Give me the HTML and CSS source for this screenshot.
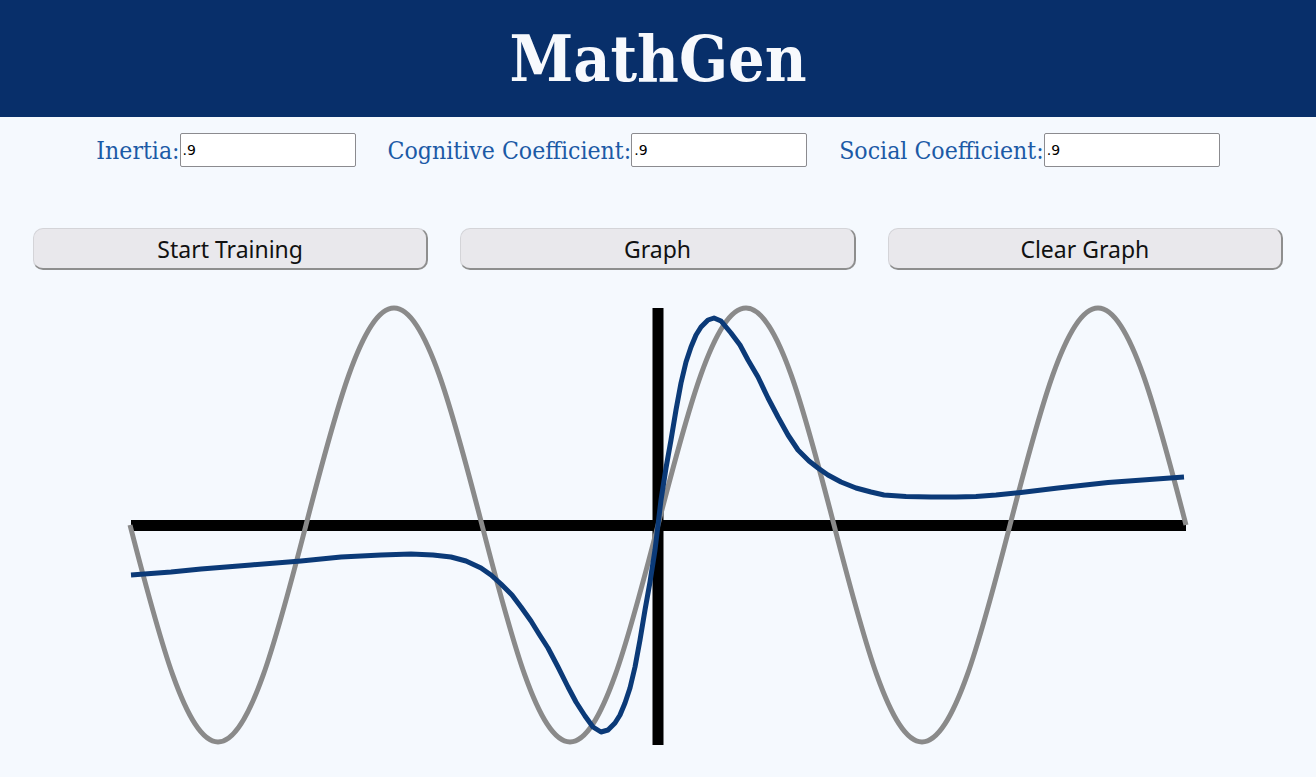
FILE: index.html
```html
<!DOCTYPE html>
<html>
<head>
<meta charset="utf-8">
<title>MathGen</title>
<link rel="stylesheet" href="styles.css">
</head>
<body>
<header class="header"><h1 class="title">MathGen</h1></header>
<div class="params">
  <label class="param"><span class="param-label">Inertia:</span><input class="param-input" type="text" value=".9"></label>
  <label class="param"><span class="param-label">Cognitive Coefficient:</span><input class="param-input" type="text" value=".9"></label>
  <label class="param"><span class="param-label">Social Coefficient:</span><input class="param-input" type="text" value=".9"></label>
</div>
<div class="actions">
  <button class="btn">Start Training</button>
  <button class="btn">Graph</button>
  <button class="btn">Clear Graph</button>
</div>
<div class="graph-wrap">
<svg class="graph" width="1056" height="437" viewBox="129 308 1056 437">
  <line x1="130" y1="525.5" x2="1185" y2="525.5" stroke="#000" stroke-width="11"/>
  <line x1="657" y1="308" x2="657" y2="745" stroke="#000" stroke-width="11"/>
  <path fill="none" stroke="#8a8a8a" stroke-width="5" d="M129,525 c28.7,111.2 56.2,217 88,217 c31.8,0 59.3,-105.8 88,-217 c28.7,-111.2 56.2,-217 88,-217 c31.8,0 59.3,105.8 88,217 c28.7,111.2 56.2,217 88,217 c31.8,0 59.3,-105.8 88,-217 c28.7,-111.2 56.2,-217 88,-217 c31.8,0 59.3,105.8 88,217 c28.7,111.2 56.2,217 88,217 c31.8,0 59.3,-105.8 88,-217 c28.7,-111.2 56.2,-217 88,-217 c31.8,0 59.3,105.8 88,217"/>
  <polyline fill="none" stroke="#0b3a78" stroke-width="5" stroke-linejoin="round" points="130,575 170,572 200,569 250,565 300,561 340,557 380,555 410,554 432,555 450,557 465,561 480,568 490,575 500,584 511,595 520,607 530,621 538,634 547,648 557,667 567,687 575,702 584,716 592,727 600,732 607,730 614,723 619,715 624,703 629,688 634,667 639,640 644,610 649,582 654,550 657,525 660,500 665,468 670,440 675,410 680,383 685,362 690,347 695,335 700,327 707,320 713,318 720,321 730,333 739,345 747,360 757,377 767,398 777,417 787,435 797,450 808,461 817,468 827,475 840,482 855,488 870,492 883,495 905,496.5 930,497 955,497 975,496.5 995,495 1020,492.5 1057,488 1107,482.5 1183,477"/>
</svg>
</div>
</body>
</html>
```

FILE: styles.css
```css
html, body {
  margin: 0;
  padding: 0;
}
body {
  background: #f5f9fe;
  font-family: "DejaVu Serif", "Liberation Serif", serif;
  width: 1316px;
  height: 777px;
  overflow: hidden;
}
.header {
  background: #082f6a;
  height: 117px;
  display: flex;
  align-items: center;
  justify-content: center;
}
.title {
  margin: 0;
  color: #f7f9fd;
  font-family: "DejaVu Serif Condensed", "DejaVu Serif", serif;
  font-stretch: condensed;
  font-weight: bold;
  font-size: 64px;
  line-height: 1;
}
.params {
  display: flex;
  justify-content: center;
  align-items: center;
  gap: 32px;
  margin-top: 16px;
  height: 34px;
}
.param {
  display: flex;
  align-items: center;
}
.param-label {
  color: #1c5aa6;
  font-family: "DejaVu Serif Condensed", "DejaVu Serif", serif;
  font-stretch: condensed;
  font-size: 24.6px;
}
.param-input {
  box-sizing: border-box;
  width: 176px;
  height: 34px;
  border: 1px solid #8b8b8f;
  border-radius: 2px;
  background: #fff;
  padding: 0 2px;
  font-family: "DejaVu Sans", sans-serif;
  font-size: 14px;
  color: #000;
}
.actions {
  display: grid;
  grid-template-columns: repeat(3, 1fr);
  gap: 32px;
  padding: 0 33px;
  margin-top: 61px;
}
.btn {
  height: 42px;
  background: #e9e8ec;
  border: 1px solid #d4d4d8;
  border-right: 2px solid #8e8e8e;
  border-bottom: 2px solid #8e8e8e;
  border-radius: 10px;
  font-family: "Noto Sans", sans-serif;
  font-size: 23px;
  color: #111;
  padding: 0;
}
.graph-wrap {
  display: flex;
  justify-content: center;
  margin-top: 38px;
}
.graph {
  display: block;
  overflow: visible;
}
```
